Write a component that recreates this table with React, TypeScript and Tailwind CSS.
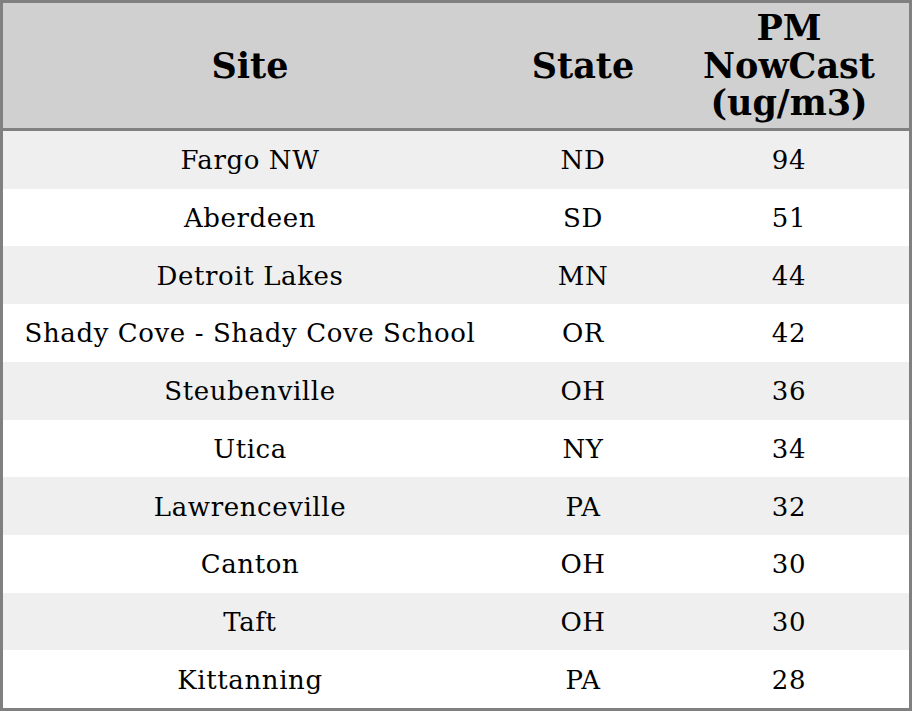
const rows = [
  { site: 'Fargo NW', state: 'ND', pm: 94 },
  { site: 'Aberdeen', state: 'SD', pm: 51 },
  { site: 'Detroit Lakes', state: 'MN', pm: 44 },
  { site: 'Shady Cove - Shady Cove School', state: 'OR', pm: 42 },
  { site: 'Steubenville', state: 'OH', pm: 36 },
  { site: 'Utica', state: 'NY', pm: 34 },
  { site: 'Lawrenceville', state: 'PA', pm: 32 },
  { site: 'Canton', state: 'OH', pm: 30 },
  { site: 'Taft', state: 'OH', pm: 30 },
  { site: 'Kittanning', state: 'PA', pm: 28 },
]

export default function App() {
  return (
    <div className="w-[912px] h-[711px] bg-white">
      <div className="flex flex-col w-full h-full border-[3px] border-[#808080] font-['DejaVu_Serif',serif] text-black">
        <div className="flex h-[128px] shrink-0 bg-[#d0d0d0] border-b-[3px] border-[#808080] text-[35px] font-bold leading-[37.5px]">
          <div className="w-[494px] flex items-center justify-center">Site</div>
          <div className="w-[172px] flex items-center justify-center">State</div>
          <div className="flex-1 flex items-center justify-center text-center">
            PM<br />NowCast<br />(ug/m3)
          </div>
        </div>
        <div className="flex-1 flex flex-col text-[26px] tracking-[0.6px]">
          {rows.map((r, i) => (
            <div key={i} className={`flex-1 flex items-center pt-[2px] ${i % 2 === 0 ? 'bg-[#efefef]' : 'bg-white'}`}>
              <div className="w-[494px] text-center">{r.site}</div>
              <div className="w-[172px] text-center">{r.state}</div>
              <div className="flex-1 text-center">{r.pm}</div>
            </div>
          ))}
        </div>
      </div>
    </div>
  )
}
